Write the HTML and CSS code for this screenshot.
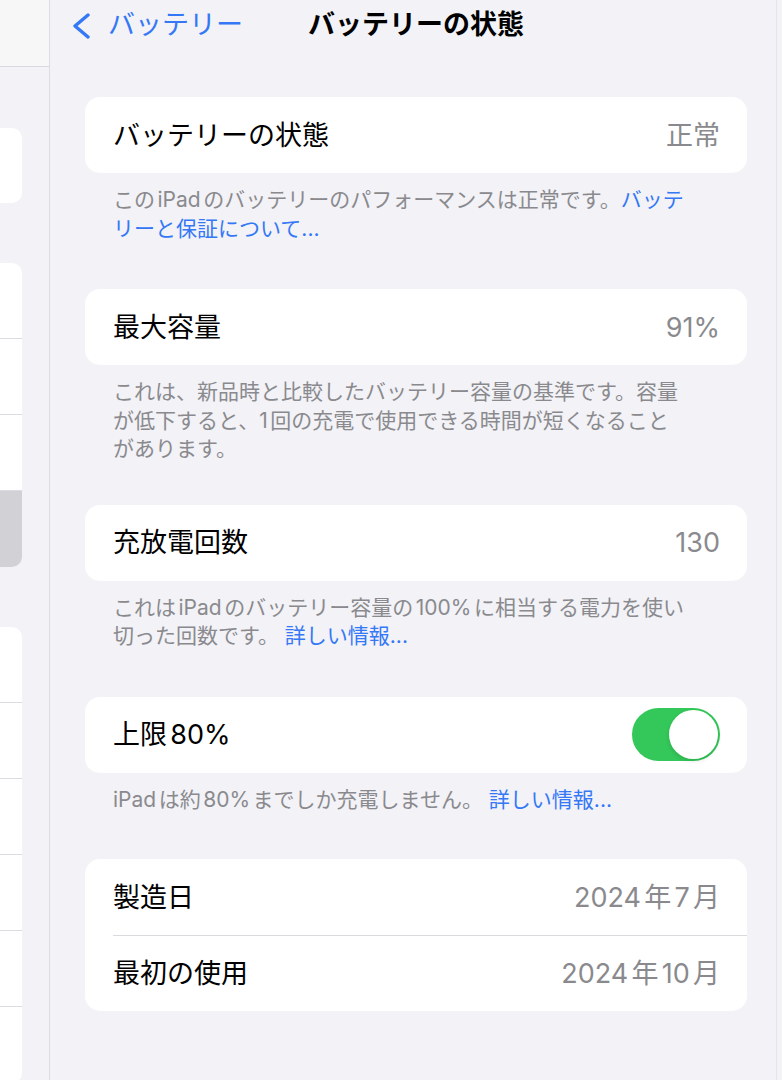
FILE: index.html
```html
<!DOCTYPE html>
<html lang="ja">
<head>
<meta charset="utf-8">
<title>バッテリーの状態</title>
<link rel="stylesheet" href="styles.css">
</head>
<body>
<div class="app">
  <aside class="sidebar">
    <div class="sb-top"></div>
    <div class="sb-group sb-single">
      <div class="sb-row"></div>
    </div>
    <div class="sb-group">
      <div class="sb-row"></div>
      <div class="sb-row"></div>
      <div class="sb-row"></div>
      <div class="sb-row selected"></div>
    </div>
    <div class="sb-group">
      <div class="sb-row"></div>
      <div class="sb-row"></div>
      <div class="sb-row"></div>
      <div class="sb-row"></div>
      <div class="sb-row"></div>
      <div class="sb-row"></div>
    </div>
  </aside>

  <main class="detail">
    <header class="nav">
      <a class="back">
        <svg class="chevron" viewBox="0 0 20 26" width="20" height="26" aria-hidden="true">
          <path d="M17 2 L4 13 L17 24" fill="none" stroke="#3478f6" stroke-width="3.4" stroke-linecap="round" stroke-linejoin="round"/>
        </svg>
        <span class="back-label">バッテリー</span>
      </a>
      <h1 class="title">バッテリーの状態</h1>
      <span class="nav-spacer"></span>
    </header>

    <section class="group">
      <div class="card">
        <div class="row"><span class="label">バッテリーの状態</span><span class="value">正常</span></div>
      </div>
      <p class="footer">この<span class="lat">iPad</span>のバッテリーのパフォーマンスは正常です。<a class="link">バッテ<br>リーと保証について...</a></p>
    </section>

    <section class="group">
      <div class="card">
        <div class="row"><span class="label">最大容量</span><span class="value">91%</span></div>
      </div>
      <p class="footer footer-tight">これは、新品時と比較したバッテリー容量の基準です。容量<br>が低下すると、<span class="lat lat-start">1</span>回の充電で使用できる時間が短くなること<br>があります。</p>
    </section>

    <section class="group">
      <div class="card">
        <div class="row"><span class="label">充放電回数</span><span class="value">130</span></div>
      </div>
      <p class="footer">これは<span class="lat">iPad</span>のバッテリー容量の<span class="lat">100%</span>に相当する電力を使い<br>切った回数です。 <a class="link">詳しい情報...</a></p>
    </section>

    <section class="group">
      <div class="card">
        <div class="row"><span class="label">上限<span class="lat">80%</span></span><span class="switch on"><span class="knob"></span></span></div>
      </div>
      <p class="footer footer-single"><span class="lat lat-start">iPad</span>は約<span class="lat">80%</span>までしか充電しません。 <a class="link">詳しい情報...</a></p>
    </section>

    <section class="group">
      <div class="card">
        <div class="row"><span class="label">製造日</span><span class="value"><span class="lat lat-start">2024</span>年<span class="lat">7</span>月</span></div>
        <div class="row"><span class="label">最初の使用</span><span class="value"><span class="lat lat-start">2024</span>年<span class="lat">10</span>月</span></div>
      </div>
    </section>
  </main>
</div>
</body>
</html>
```

FILE: styles.css
```css
* { box-sizing: border-box; }

html, body {
  margin: 0;
  padding: 0;
  background: #f2f2f7;
}

body {
  font-family: "Inter", "Noto Sans CJK JP", sans-serif;
  color: #000;
  -webkit-font-smoothing: antialiased;
}

.app {
  display: flex;
  width: 782px;
  height: 1080px;
  overflow: hidden;
}

/* ---------- sidebar ---------- */
.sidebar {
  width: 50px;
  flex-shrink: 0;
  background: #f2f2f7;
  border-right: 1px solid #dcdce1;
  display: flex;
  flex-direction: column;
  overflow: hidden;
}

.sb-top {
  height: 67px;
  flex-shrink: 0;
  background: #f7f7f8;
  border-bottom: 1px solid #d9d9dc;
  margin-bottom: 61px;
}

.sb-group {
  margin: 0 27px 60px -20px;
  background: #fff;
  border-radius: 10px;
  overflow: hidden;
  flex-shrink: 0;
}

.sb-row {
  height: 76px;
  border-bottom: 1px solid #dcdce0;
}

.sb-group .sb-row:last-child {
  border-bottom-color: transparent;
}

.sb-single .sb-row { height: 75px; }

.sb-row.selected {
  background: #d1d1d6;
  border-bottom-color: transparent;
}

/* ---------- detail ---------- */
.detail {
  flex: 1;
  min-width: 0;
  display: flex;
  flex-direction: column;
  box-shadow: inset -5px 0 0 #f2f2f7, inset -6px 0 0 #e4e4e9;
}

.nav {
  height: 48px;
  flex-shrink: 0;
  padding: 0 23px;
  display: grid;
  grid-template-columns: 1fr auto 1fr;
  align-items: center;
}

.back {
  display: flex;
  align-items: center;
  gap: 17px;
  color: #3478f6;
  text-decoration: none;
}

.chevron { display: block; margin-top: 4px; margin-left: -2px; }

.back-label {
  font-size: 27px;
  line-height: 1;
}

.title {
  margin: 0;
  font-size: 27px;
  font-weight: 700;
  line-height: 1;
  letter-spacing: 0;
}

.group {
  margin: 0 35px;
  flex-shrink: 0;
}

.group:first-of-type { margin-top: 49px; }

.card {
  background: #fff;
  border-radius: 15px;
  overflow: hidden;
}

.row {
  height: 76px;
  margin-left: 28px;
  padding-right: 28px;
  display: flex;
  align-items: center;
  justify-content: space-between;
}

.row + .row {
  height: 76px;
  border-top: 1px solid #d9d9de;
}

.label {
  font-size: 27px;
  line-height: 1;
  color: #000;
}

.value {
  font-size: 27px;
  line-height: 1;
  color: #8a8a8e;
  margin-right: -1px;
}

.lat { margin: 0 0.12em; }
.lat-start { margin-left: 0; }

.footer {
  margin: 13px 0 46px;
  padding: 0 28px;
  font-size: 21px;
  line-height: 28.5px;
  color: #8a8a8e;
}

.footer-tight { margin-bottom: 41px; }
.footer-single { margin-bottom: 45px; }

.link {
  color: #3478f6;
  text-decoration: none;
}

/* ---------- switch ---------- */
.switch {
  width: 88px;
  height: 53px;
  border-radius: 27px;
  background: #e9e9eb;
  padding: 2px;
  display: flex;
  justify-content: flex-start;
  margin-right: -1px;
}

.switch.on {
  background: #34c759;
  justify-content: flex-end;
}

.knob {
  width: 49px;
  height: 49px;
  border-radius: 50%;
  background: #fff;
  box-shadow: 0 2px 4px rgba(0, 0, 0, 0.12);
}
```
